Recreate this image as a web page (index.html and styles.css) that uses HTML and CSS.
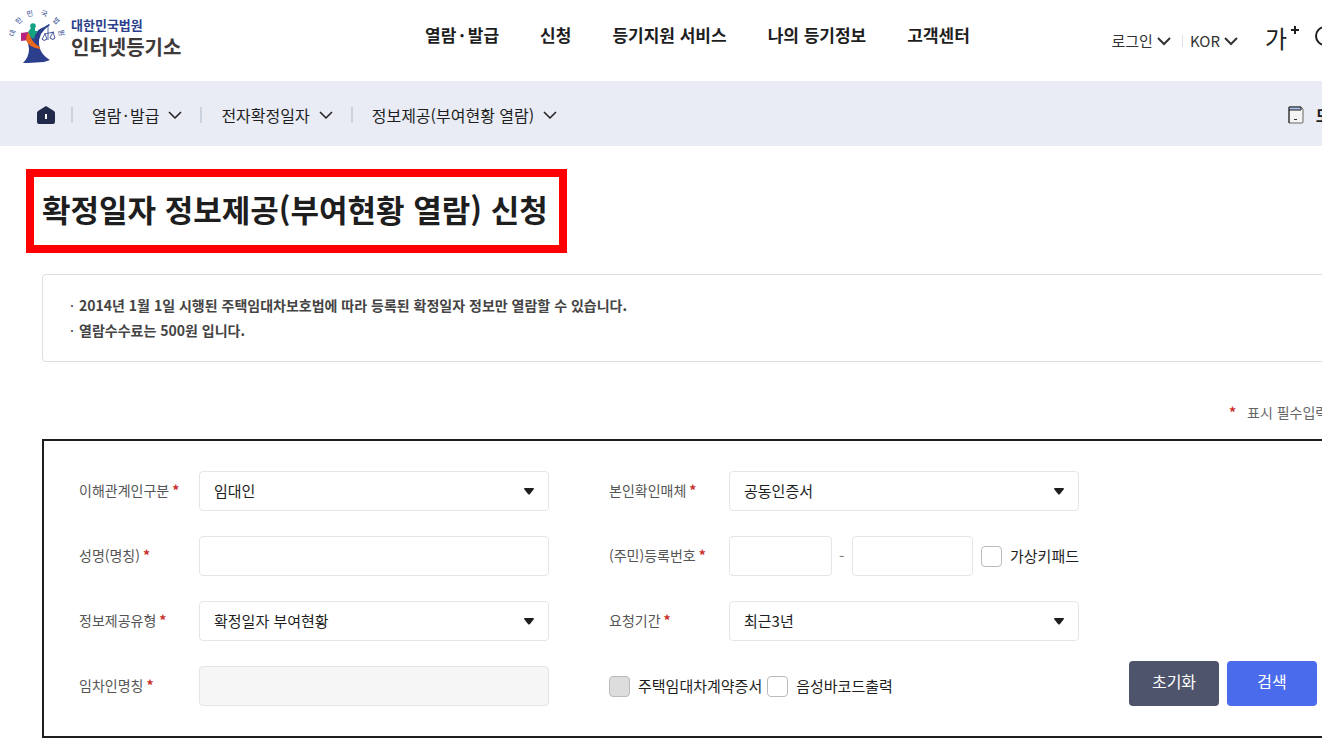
FILE: index.html
```html
<!DOCTYPE html>
<html lang="ko">
<head>
<meta charset="utf-8">
<meta name="viewport" content="width=device-width, initial-scale=1">
<title>확정일자 정보제공(부여현황 열람) 신청</title>
<link rel="stylesheet" href="styles.css">
</head>
<body>
<div class="page">
  <header class="header">
    <a class="logo" href="#">
      <svg class="logo-mark" viewBox="0 0 60 60" aria-hidden="true">
        <g class="logo-ring">
          <text transform="translate(5 27) rotate(-75)" y="2">대</text>
          <text transform="translate(11 15) rotate(-45)" y="2">한</text>
          <text transform="translate(22 8) rotate(-12)" y="2">민</text>
          <text transform="translate(36 8) rotate(14)" y="2">국</text>
          <text transform="translate(48 15) rotate(45)" y="2">법</text>
          <text transform="translate(53 27) rotate(78)" y="2">원</text>
        </g>
        <path fill="#2b3f8d" d="M19 31 L27 28 Q30 23 36 21 L41 18 42 19 Q36 23 33 28 L31 34 Q30 47 42 54 L36 56 20 57 Q18 57 15 57 Q21 51 21 43 Z"/>
        <circle cx="25" cy="20" r="2.800" fill="#12a383"/>
        <path fill="#12a383" d="M23 22 H27 V25 L30 25 Q27 28 26 33 L21 30 20 26Z"/>
        <path fill="#b5257f" d="M13 27 L20 26 21 34 13 35Z"/>
        <path fill="#e9681f" d="M19 28 L21 27 Q24 37 32 41 L32 43 Q20 41 18 34Z"/>
        <path fill="none" stroke="#2b3f8d" stroke-width="0.800" d="M40 19 V32 M36 28 L46 26 M37 28 L34 33 M37 28 L39 33 M45 26 L42 32 M45 26 L47 32 M40 32 V34"/>
        <path fill="none" stroke="#2b3f8d" d="M34 33 Q36 36 39 33 M42 32 Q45 35 47 32"/>
      </svg>
      <span class="logo-text">
        <span class="logo-court">대한민국법원</span>
        <span class="logo-name">인터넷등기소</span>
      </span>
    </a>
    <nav class="menu">
      <a href="#">열람<span class="dot">·</span>발급</a>
      <a href="#">신청</a>
      <a href="#">등기지원 서비스</a>
      <a href="#">나의 등기정보</a>
      <a href="#">고객센터</a>
    </nav>
    <div class="tools">
      <button class="tool" type="button">로그인
        <svg class="chevron" viewBox="0 0 14 10" aria-hidden="true"><path d="M1 2 L7 8 L13 2"/></svg>
      </button>
      <span class="tool-line"></span>
      <button class="tool" type="button">KOR
        <svg class="chevron" viewBox="0 0 14 10" aria-hidden="true"><path d="M1 2 L7 8 L13 2"/></svg>
      </button>
      <button class="zoom-button" type="button" aria-label="글자 크게"><span>가</span><svg viewBox="0 0 8 8" aria-hidden="true"><path d="M4 0 V8 M0 4 H8"/></svg></button>
      <button class="search-button" type="button" aria-label="통합검색"><svg viewBox="0 0 24 24" aria-hidden="true"><circle cx="10" cy="10" r="9"/><path d="M17 17 L23 23"/></svg></button>
    </div>
  </header>

  <div class="crumbs">
    <a class="home" href="#" aria-label="홈"><svg viewBox="0 0 18 18" aria-hidden="true"><path fill="#212a4a" d="M9 0 L17 5 Q18 6 18 7 V16 Q18 18 16 18 H2 Q0 18 0 16 V7 Q0 6 1 5Z"/><path fill="#fff" d="M8 8 H10 V13 H8Z"/></svg></a>
    <button class="crumb" type="button"><span>열람<span class="dot">·</span>발급</span>
      <svg class="chevron" viewBox="0 0 14 10" aria-hidden="true"><path d="M1 2 L7 8 L13 2"/></svg>
    </button>
    <button class="crumb" type="button">전자확정일자
      <svg class="chevron" viewBox="0 0 14 10" aria-hidden="true"><path d="M1 2 L7 8 L13 2"/></svg>
    </button>
    <button class="crumb" type="button">정보제공(부여현황 열람)
      <svg class="chevron" viewBox="0 0 14 10" aria-hidden="true"><path d="M1 2 L7 8 L13 2"/></svg>
    </button>
    <a class="mobile" href="#">
      <svg viewBox="0 0 16 18" aria-hidden="true"><path fill="#f4f4f2" stroke="#666" d="M1 1 H13 L15 3 V16 Q15 17 14 17 H1Z"/><path fill="#a9bdec" d="M1 1 H13 V4 H1Z"/><path fill="none" stroke="#1c1c1c" d="M1 17 V1 H13 V4 H1"/><path stroke="#333" d="M6 13.500 H9"/></svg>
      모바일
    </a>
  </div>

  <main class="main">
    <h1 class="title">확정일자 정보제공(부여현황 열람) 신청</h1>
    <ul class="notice">
      <li>2014년 1월 1일 시행된 주택임대차보호법에 따라 등록된 확정일자 정보만 열람할 수 있습니다.</li>
      <li>열람수수료는 500원 입니다.</li>
    </ul>
    <p class="required-note"><span class="star">*</span>표시 필수입력사항</p>

    <form class="panel">
      <div class="fields">
        <label class="label" for="role">이해관계인구분<span class="star">*</span></label>
        <div class="select">
          <select id="role"><option>임대인</option></select>
          <svg viewBox="0 0 10 7" aria-hidden="true"><path d="M1 0 H9 Q10 0 10 1 L6 6 Q5 7 4 6 L0 1 Q0 0 1 0Z"/></svg>
        </div>
        <label class="label second" for="cert">본인확인매체<span class="star">*</span></label>
        <div class="select">
          <select id="cert"><option>공동인증서</option></select>
          <svg viewBox="0 0 10 7" aria-hidden="true"><path d="M1 0 H9 Q10 0 10 1 L6 6 Q5 7 4 6 L0 1 Q0 0 1 0Z"/></svg>
        </div>

        <label class="label" for="name">성명(명칭)<span class="star">*</span></label>
        <input class="input" id="name" type="text">
        <label class="label second" for="reg1">(주민)등록번호<span class="star">*</span></label>
        <div class="reg">
          <input class="input reg-front" id="reg1" type="text">
          <span class="dash">-</span>
          <input class="input reg-back" type="password" aria-label="등록번호 뒷자리">
          <label class="check"><input type="checkbox">가상키패드</label>
        </div>

        <label class="label" for="type">정보제공유형<span class="star">*</span></label>
        <div class="select">
          <select id="type"><option>확정일자 부여현황</option></select>
          <svg viewBox="0 0 10 7" aria-hidden="true"><path d="M1 0 H9 Q10 0 10 1 L6 6 Q5 7 4 6 L0 1 Q0 0 1 0Z"/></svg>
        </div>
        <label class="label second" for="period">요청기간<span class="star">*</span></label>
        <div class="select">
          <select id="period"><option>최근3년</option></select>
          <svg viewBox="0 0 10 7" aria-hidden="true"><path d="M1 0 H9 Q10 0 10 1 L6 6 Q5 7 4 6 L0 1 Q0 0 1 0Z"/></svg>
        </div>

        <label class="label" for="tenant">임차인명칭<span class="star">*</span></label>
        <input class="input" id="tenant" type="text" disabled>
        <div class="checks second">
          <label class="check"><input type="checkbox" disabled>주택임대차계약증서</label>
          <label class="check"><input type="checkbox">음성바코드출력</label>
        </div>
      </div>
      <div class="actions">
        <button class="button reset" type="reset">초기화</button>
        <button class="button submit" type="button">검색</button>
      </div>
    </form>
  </main>
</div>
</body>
</html>
```

FILE: styles.css
```css
* {
  box-sizing: border-box;
}

body {
  margin: 0;
  overflow-x: hidden;
  background: #fff;
  color: #1e1e1e;
  font-family: "Noto Sans CJK KR", "Noto Sans", sans-serif;
  font-size: 15px;
  line-height: 24px;
}

button,
input,
select {
  font: inherit;
  color: inherit;
}

button {
  padding: 0;
  border: 0;
  background: none;
}

a {
  color: inherit;
  text-decoration: none;
}

/* The layout runs wider than the window; the excess is clipped. */
.page {
  width: calc(100% + 74px);
}

.header {
  display: flex;
  align-items: flex-start;
  height: 81px;
  padding-left: 8px;
}

.logo {
  display: flex;
  width: 417px;
  padding-top: 6px;
}

.logo-mark {
  width: 60px;
  height: 60px;
}

.logo-ring {
  fill: #2b3f8d;
  font-size: 7px;
  font-weight: 400;
  text-anchor: middle;
}

.logo-text {
  display: flex;
  flex-direction: column;
  padding: 9px 0 0 3px;
}

.logo-court {
  color: #2b3f8d;
  font-size: 13px;
  font-weight: 700;
  line-height: 20px;
}

.logo-name {
  color: #3e3a39;
  font-size: 20px;
  font-weight: 700;
  line-height: 24px;
}

.menu {
  display: flex;
  gap: 41px;
  padding-top: 23px;
  font-size: 17px;
  font-weight: 700;
}

.dot {
  padding: 0 2px;
}

.menu .dot {
  padding: 0 3px;
}

.tools {
  display: flex;
  align-items: center;
  margin-left: auto;
  padding: 26px 57px 0 0;
  color: #333;
}

.tool {
  display: flex;
  align-items: center;
  gap: 4px;
  line-height: 30px;
}

.chevron {
  width: 14px;
  height: 10px;
  fill: none;
  stroke: currentColor;
  stroke-width: 2;
}

.tool-line {
  width: 1px;
  height: 12px;
  margin: 0 7px 0 11px;
  background: #dfe2ec;
}

.zoom-button {
  display: flex;
  align-items: flex-start;
  gap: 4px;
  margin-left: 27px;
  padding-bottom: 6px;
  color: #1e1e1e;
  font-size: 24px;
  line-height: 24px;
}

.zoom-button svg {
  width: 8px;
  height: 8px;
  stroke: currentColor;
  stroke-width: 2;
}

.search-button {
  margin-left: 16px;
  padding-bottom: 6px;
}

.search-button svg {
  display: block;
  width: 24px;
  height: 24px;
  fill: none;
  stroke: #1e1e1e;
  stroke-width: 2;
}

.crumbs {
  display: flex;
  align-items: center;
  height: 65px;
  padding: 2px 36px 0 37px;
  background: #e9ecf5;
  font-size: 16px;
}

.home {
  margin-right: 16px;
}

.home svg {
  display: block;
  width: 18px;
  height: 18px;
}

.crumb {
  display: flex;
  align-items: center;
  gap: 9px;
  height: 16px;
  margin-right: 18px;
  padding-left: 19px;
  border-left: 2px solid #cdd2df;
}

.crumb .chevron {
  stroke-width: 1.500;
}

.mobile {
  display: flex;
  align-items: center;
  gap: 12px;
  margin-left: auto;
  font-weight: 700;
}

.mobile svg {
  width: 16px;
  height: 18px;
}

.main {
  padding: 23px 42px 9px;
}

.title {
  width: fit-content;
  margin: 0 0 21px -16px;
  padding: 0 11px 4px 8px;
  border: 8px solid #f00;
  font-size: 31px;
  font-weight: 700;
  line-height: 64px;
}

.notice {
  margin: 0;
  padding: 18px 27px;
  border: 1px solid #ddd;
  border-radius: 4px;
  color: #444;
  font-size: 14px;
  font-weight: 700;
  line-height: 25px;
  list-style: none;
}

.notice li {
  display: flex;
}

.notice li::before {
  content: "·";
  flex: 0 0 9px;
  font-weight: 400;
}

.required-note {
  display: flex;
  justify-content: flex-end;
  gap: 11px;
  margin: 38px 0 15px;
  color: #666;
  font-size: 14px;
}

.star {
  color: #c9302c;
  font-weight: 700;
}

.panel {
  display: flex;
  align-items: flex-end;
  gap: 50px;
  padding: 30px 35px;
  border: 2px solid #1e1e1e;
}

.fields {
  display: grid;
  flex: 1;
  grid-template-columns: 120px 1fr 180px 1fr;
  grid-auto-rows: 40px;
  row-gap: 25px;
  align-items: center;
}

.second {
  padding-left: 60px;
}

.label {
  display: flex;
  gap: 3px;
  padding-bottom: 2px;
  color: #555;
  font-size: 14px;
}

.input,
.select select {
  width: 100%;
  min-width: 0;
  height: 40px;
  padding: 0 14px;
  border: 1px solid #e5e5e5;
  border-radius: 4px;
  background: #fff;
}

.input:disabled {
  background: #f6f6f6;
}

.select {
  display: grid;
  align-items: center;
}

.select select {
  grid-area: 1 / 1;
  appearance: none;
  color: #1e1e1e;
}

.select svg {
  grid-area: 1 / 1;
  justify-self: end;
  width: 10px;
  height: 7px;
  margin-right: 15px;
  fill: #1e1e1e;
  pointer-events: none;
}

.reg {
  display: flex;
  align-items: center;
}

.reg-front {
  flex: 73 1 0;
}

.reg-back {
  flex: 92 1 0;
  margin-right: 8px;
}

.dash {
  width: 20px;
  color: #777;
  text-align: center;
}

.checks {
  display: flex;
  grid-column: 3 / 5;
  gap: 5px;
}

.check {
  display: flex;
  align-items: center;
  gap: 8px;
  white-space: nowrap;
}

.check input {
  width: 21px;
  height: 21px;
  margin: 0;
  border: 1px solid #bbb;
  border-radius: 4px;
  appearance: none;
  background: #fff;
}

.check input:disabled {
  background: #ddd;
}

.actions {
  display: flex;
  gap: 8px;
}

.button {
  width: 90px;
  height: 45px;
  padding-bottom: 6px;
  border-radius: 4px;
  color: #fff;
  font-size: 16px;
}

.reset {
  background: #4e546c;
}

.submit {
  background: #4a6cec;
}
```
